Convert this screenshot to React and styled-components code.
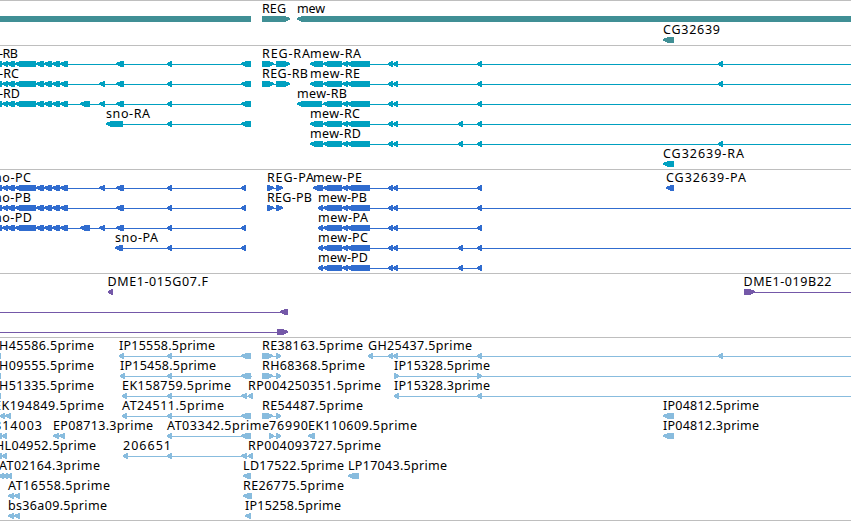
import React from 'react';
import styled, { createGlobalStyle } from 'styled-components';

const GlobalStyle = createGlobalStyle`
	body {
		margin: 0;
		background: #fff;
		overflow: hidden;
	}
`;

const Browser = styled.main`
	display: flex;
	flex-direction: column;
	width: 851px;
	height: 521px;
	box-sizing: border-box;
	overflow: hidden;
	border-bottom: 1px solid #bebebe;
`;

const Track = styled.section`
	display: flex;
	flex-direction: column;
	flex: none;
	gap: ${(props) => props.$gap || 0}px;
	padding: 2px 0 ${(props) => (props.$last ? 0 : 1)}px;
	border-top: 1px solid #bebebe;
	color: ${(props) => props.$color};
`;

const Lane = styled.svg`
	display: block;
	flex: none;
	width: 851px;
	height: 20px;
	overflow: visible;
	fill: currentColor;
	shape-rendering: crispEdges;
`;

const Label = styled.text`
	font-family: 'Noto Sans', sans-serif;
	font-size: 12.5px;
	fill: #000;
`;

// feature: label, label start, label end, direction, exons, connector line
const f = (label, x, end, dir, exons, line) => ({ label, x, end, dir, exons, line });

const LEFT = [[-4, 2], [2, 8], [7, 15], [15, 36], [36, 44], [44, 52], [52, 60], [60, 68]];
const MID = [[323, 342], [342, 348], [347, 370], [388, 393], [393, 398]];
const CDNA = [[262, 273], [276, 281]];

const tracks = [
	{
		color: '#408f95',
		gap: 1,
		lanes: [
			[
				f('', 0, 0, 'none', [[0, 251]]),
				f('REG', 262, 286, 'right', [[262, 290]]),
				f('mew', 297, 325, 'left', [[297, 851]]),
			],
			[f('CG32639', 663, 720, 'left', [[663, 674]])],
		],
	},
	{
		color: '#00a0c0',
		lanes: [
			[
				f('-RB', -1, 18, 'left', [...LEFT, [116, 124], [167, 172], [241, 251]], [0, 251]),
				f('REG-RA', 262, 310, 'right', [[262, 274], [276, 290]], [262, 290]),
				f('mew-RA', 310, 361, 'left', [[310, 323], ...MID, [477, 482], [718, 723]], [310, 851]),
			],
			[
				f('-RC', -1, 19, 'left', [...LEFT, [99, 105], [116, 124], [167, 172], [241, 251]], [0, 251]),
				f('REG-RB', 262, 308, 'right', [[262, 274], [276, 290]], [262, 290]),
				f('mew-RE', 310, 360, 'left', [[310, 323], ...MID, [477, 482], [718, 723]], [310, 851]),
			],
			[
				f('-RD', -1, 20, 'left', [...LEFT, [80, 90], [99, 105], [116, 124], [167, 172], [241, 251]], [0, 251]),
				f('mew-RB', 297, 347, 'left', [[297, 322], ...MID, [477, 482]], [297, 851]),
			],
			[
				f('sno-RA', 106, 150, 'left', [[106, 123], [167, 172], [241, 251]], [106, 251]),
				f('mew-RC', 310, 360, 'left', [[310, 323], ...MID, [458, 463], [477, 482]], [310, 851]),
			],
			[f('mew-RD', 310, 361, 'left', [[310, 323], ...MID, [458, 463], [477, 482], [718, 723]], [310, 851])],
			[f('CG32639-RA', 663, 744, 'left', [[663, 674]])],
		],
	},
	{
		color: '#306ccf',
		lanes: [
			[
				f('no-PC', -6, 31, 'left', [...LEFT, [99, 105], [116, 124], [167, 172], [241, 246]], [0, 246]),
				f('REG-PA', 267, 314, 'right', [[267, 274], [276, 283]], [267, 283]),
				f('mew-PE', 313, 362, 'left', [[313, 323], ...MID, [477, 482]], [313, 482]),
				f('CG32639-PA', 666, 746, 'left', [[666, 674]]),
			],
			[
				f('no-PB', -6, 31, 'left', [...LEFT, [116, 124], [167, 172], [241, 246]], [0, 246]),
				f('REG-PB', 267, 312, 'right', [[267, 274], [276, 283]], [267, 283]),
				f('mew-PB', 318, 367, 'left', [[318, 323], ...MID, [477, 482]], [318, 851]),
			],
			[
				f('no-PD', -6, 32, 'left', [...LEFT, [80, 90], [99, 105], [116, 124], [167, 172], [241, 246]], [0, 246]),
				f('mew-PA', 318, 368, 'left', [[318, 323], ...MID, [477, 482]], [318, 482]),
			],
			[
				f('sno-PA', 115, 158, 'left', [[115, 123], [167, 172], [241, 246]], [115, 246]),
				f('mew-PC', 318, 368, 'left', [[318, 323], ...MID, [458, 463], [477, 482]], [318, 851]),
			],
			[f('mew-PD', 318, 368, 'left', [[318, 323], ...MID, [458, 463], [477, 482]], [318, 482])],
		],
	},
	{
		color: '#7458a8',
		lanes: [
			[
				f('DME1-015G07.F', 107.5, 208, 'left', [[108, 113]]),
				f('DME1-019B22', 743.5, 831.5, 'right', [[744, 755]], [744, 851]),
			],
			[f('', 0, 0, 'left', [[280, 288]], [0, 288])],
			[f('', 0, 0, 'right', [[277, 288]], [0, 288])],
		],
	},
	{
		color: '#88bcde',
		lanes: [
			[
				f('H45586.5prime', -1, 94, 'none', [[0, 1]]),
				f('IP15558.5prime', 119, 215, 'left', [[119, 124], [167, 172], [241, 251]], [119, 251]),
				f('RE38163.5prime', 262, 363, 'right', CDNA, [262, 281]),
				f('GH25437.5prime', 368, 472, 'left', [[368, 373], [388, 393], [393, 398], [477, 482], [718, 723]], [368, 851]),
			],
			[
				f('H09555.5prime', -1, 94, 'none', [[0, 1]]),
				f('IP15458.5prime', 120, 216, 'left', [[120, 125], [167, 172], [241, 251]], [120, 252]),
				f('RH68368.5prime', 262, 365, 'right', CDNA, [262, 281]),
				f('IP15328.5prime', 394, 490, 'right', [[394, 399], [477, 482]], [394, 851]),
			],
			[
				f('H51335.5prime', -1, 94, 'none', [[0, 1]]),
				f('EK158759.5prime', 122, 231, 'left', [[122, 127], [167, 172], [241, 247], [248, 253]], [122, 253]),
				f('RP004250351.5prime', 248, 381, 'left', []),
				f('IP15328.3prime', 394, 490, 'left', [[394, 399], [477, 482]], [394, 851]),
			],
			[
				f('EK194849.5prime', -6, 104, 'left', [[0, 5], [5, 11]]),
				f('AT24511.5prime', 122, 224, 'left', [[122, 127], [167, 172], [241, 251]], [122, 251]),
				f('RE54487.5prime', 262, 363, 'right', CDNA, [262, 281]),
				f('IP04812.5prime', 663, 759, 'left', [[663, 674]]),
			],
			[
				f('814003', -6, 42, 'left', [[-4, 2], [2, 7]]),
				f('EP08713.3prime', 53, 153, 'left', [[53, 59], [59, 65]]),
				f('AT03342.5prime', 167, 269, 'left', [[167, 172], [241, 251]], [167, 251]),
				f('76990', 269, 308, 'right', [[269, 274], [276, 281]], [269, 281]),
				f('EK110609.5prime', 308, 417, 'left', [[308, 315]]),
				f('IP04812.3prime', 663, 759, 'left', [[663, 674]]),
			],
			[
				f('HL04952.5prime', -5, 96, 'left', [[-4, 2], [2, 7]]),
				f('206651', 123, 171, 'left', [[123, 128], [167, 172], [241, 247], [248, 253]], [123, 253]),
				f('RP004093727.5prime', 248, 381, 'left', []),
			],
			[
				f('AT02164.3prime', -1, 100, 'left', [[-1, 4], [3, 8], [7, 12]]),
				f('LD17522.5prime', 243, 344, 'left', [[243, 251]]),
				f('LP17043.5prime', 348, 447, 'left', [[348, 359]]),
			],
			[
				f('AT16558.5prime', 8, 110, 'left', [[8, 14], [14, 20]]),
				f('RE26775.5prime', 243, 344, 'left', [[243, 252]]),
			],
			[
				f('bs36a09.5prime', 8, 107, 'left', [[8, 14], [14, 20]]),
				f('IP15258.5prime', 245, 341, 'left', [[245, 251]]),
			],
		],
	},
];

function Exon({ from, to, dir }) {
	const head = Math.min(5, to - from - 1);
	if (dir === 'left') {
		return <polygon points={`${from},15 ${from + head},13 ${to},13 ${to},19 ${from + head},19 ${from},16.8`} />;
	}
	if (dir === 'right') {
		return <polygon points={`${from},13 ${to - head},13 ${to},15 ${to},16.8 ${to - head},19 ${from},19`} />;
	}
	return <rect x={from} y="13" width={to - from} height="6" />;
}

function Feature({ label, x, end, dir, exons, line }) {
	return (
		<g>
			{line && <rect x={line[0]} y="16" width={line[1] - line[0]} height="1" />}
			{exons.map(([from, to]) => (
				<Exon key={from} from={from} to={to} dir={dir} />
			))}
			{label && (
				<Label x={x} y="10" textLength={end - x}>
					{label}
				</Label>
			)}
		</g>
	);
}

export default function App() {
	return (
		<>
			<GlobalStyle />
			<Browser>
				{tracks.map((track, i) => (
					<Track key={track.color} $color={track.color} $gap={track.gap} $last={i === tracks.length - 1}>
						{track.lanes.map((lane, n) => (
							<Lane key={n} viewBox="0 0 851 20">
								{lane.map((feature) => (
									<Feature key={feature.label} {...feature} />
								))}
							</Lane>
						))}
					</Track>
				))}
			</Browser>
		</>
	);
}
